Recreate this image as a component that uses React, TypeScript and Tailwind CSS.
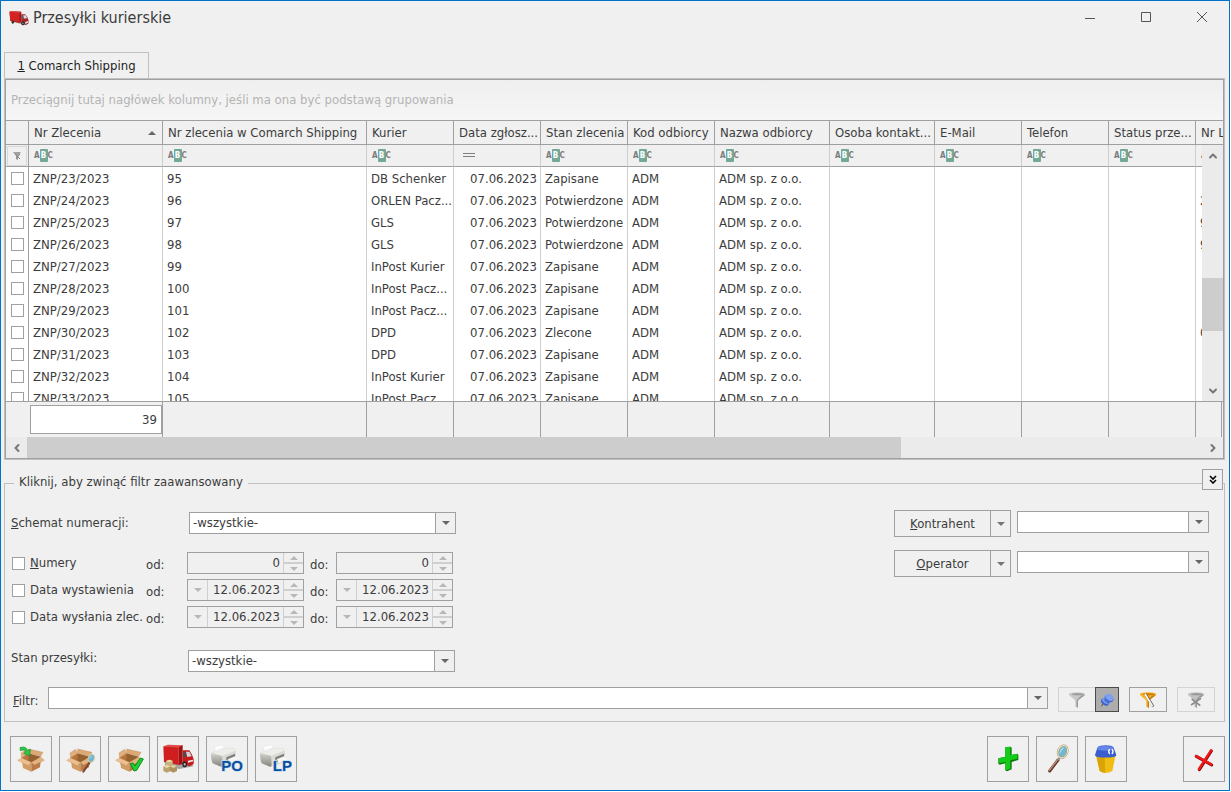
import type { ReactNode } from "react";
import { ChevronDown, ChevronLeft, ChevronRight, ChevronUp } from "lucide-react";

// the last column takes whatever is left
const columns = [
  { label: "", width: 23 },
  { label: "Nr Zlecenia", width: 134, sorted: true },
  { label: "Nr zlecenia w Comarch Shipping", width: 204 },
  { label: "Kurier", width: 87 },
  { label: "Data zgłosz...", width: 87, date: true },
  { label: "Stan zlecenia", width: 87 },
  { label: "Kod odbiorcy", width: 87 },
  { label: "Nazwa odbiorcy", width: 115 },
  { label: "Osoba kontakt...", width: 105 },
  { label: "E-Mail", width: 87 },
  { label: "Telefon", width: 87 },
  { label: "Status prze...", width: 87 },
  { label: "Nr L" },
];

const rows = [
  ["ZNP/23/2023", "95", "DB Schenker", "Zapisane", ""],
  ["ZNP/24/2023", "96", "ORLEN Pacz...", "Potwierdzone", "2"],
  ["ZNP/25/2023", "97", "GLS", "Potwierdzone", "9"],
  ["ZNP/26/2023", "98", "GLS", "Potwierdzone", "9"],
  ["ZNP/27/2023", "99", "InPost Kurier", "Zapisane", ""],
  ["ZNP/28/2023", "100", "InPost Pacz...", "Zapisane", ""],
  ["ZNP/29/2023", "101", "InPost Pacz...", "Zapisane", ""],
  ["ZNP/30/2023", "102", "DPD", "Zlecone", "0"],
  ["ZNP/31/2023", "103", "DPD", "Zapisane", ""],
  ["ZNP/32/2023", "104", "InPost Kurier", "Zapisane", ""],
  ["ZNP/33/2023", "105", "InPost Pacz...", "Zapisane", ""],
];

const checkbox =
  "block h-[13px] w-[13px] shrink-0 appearance-none border border-[#a0a0a0] bg-white checked:bg-[#4a4a4a]";

function Columns() {
  return (
    <colgroup>
      {columns.map((c) => (
        <col key={c.label} style={{ width: c.width }} />
      ))}
    </colgroup>
  );
}

function Triangle({ up = false, className = "" }: { up?: boolean; className?: string }) {
  return (
    <svg viewBox="0 0 8 4" className={`h-1 w-2 ${className}`} fill="currentColor" aria-hidden="true">
      <path d={up ? "M4 0 8 4H0z" : "M0 0h8L4 4z"} />
    </svg>
  );
}

function AbcIcon() {
  return (
    <span className="flex items-center text-[8px] leading-none font-bold text-[#7b7b7b]">
      <span>A</span>
      <span className="flex h-[13px] w-2 items-center justify-center rounded-[1px] bg-[#74a896] text-white">B</span>
      <span>C</span>
    </span>
  );
}

function Truck({ className }: { className: string }) {
  return (
    <svg viewBox="0 0 58 46" className={className} aria-hidden="true">
      <path d="M4 32 30 38 50 44 58 38 30 30z" fill="#333" opacity=".5" />
      <path d="M0 2 6 0 36 2 36 34 30 36 2 30z" fill="#a81818" />
      <path d="M0 2 30 5v31L2 30z" fill="#d32424" />
      <path d="m0 2 6-2 30 2-6 3z" fill="#e85050" />
      <path d="M36 10h12l7 10 3 8v10l-8 4-14-5z" fill="#a32626" />
      <path d="M42 13h7l5 9-10 1z" fill="#d9e2e6" />
      <path d="M37 13h4l1 10-5-1z" fill="#54646d" />
      <path d="m48 34 9-3v5l-9 4z" fill="#ddd" />
      <ellipse cx="10" cy="34" rx="4" ry="5" fill="#2b2b2b" />
      <ellipse cx="41" cy="38" rx="5" ry="6" fill="#222" />
      <ellipse cx="41" cy="38" rx="2" ry="3" fill="#aaa" />
    </svg>
  );
}

function Icon({ children }: { children: ReactNode }) {
  return (
    <svg viewBox="0 0 96 96" className="h-8 w-8" aria-hidden="true">
      {children}
    </svg>
  );
}

function Box() {
  return (
    <>
      <path d="m19 45 22-14 37 10-29 18z" fill="#96602f" />
      <path d="m19 45 22-14v18l-8 5z" fill="#b5773f" />
      <path d="m20 44 21-13-6-12-17 11z" fill="#e2ae7b" stroke="#b98150" />
      <path d="m41 31 36 9 7-12-43-10z" fill="#dca873" stroke="#b98150" />
      <path d="m20 47 29 13v26L24 75z" fill="#d19b65" />
      <path d="m49 60 29-14-3 27-26 13z" fill="#b97c48" />
      <path d="m20 45 29 13-9 10L8 52z" fill="#ecc090" stroke="#c08a58" />
      <path d="m49 58 29-15 10 9-30 14z" fill="#e3b380" stroke="#bb8350" />
    </>
  );
}

function Printer({ text }: { text: string }) {
  return (
    <Icon>
      <defs>
        <linearGradient id={`printer-${text}`} x1="0" y1="0" x2="0" y2="1">
          <stop offset="0" stopColor="#d2d2cc" />
          <stop offset="1" stopColor="#85857e" />
        </linearGradient>
      </defs>
      <path d="m11 14 3-5 20-3 4 6 1 13-26 4z" fill="#fdfdfd" stroke="#dcdcdc" />
      <path d="m1 30 37-15 32 2 4 8-40 15z" fill="#ededea" stroke="#cfcfca" />
      <path d="M2 31q-3 2-2 10l3 16q1 4 5 5l22 9q5 1 5-4V43q0-4-4-5z" fill={`url(#printer-${text})`} />
      <path d="m34 39 38-16q3 0 3 5v27L37 72z" fill="#dadad6" />
      <path d="m46 43 26-11v16L46 60z" fill="#7f7f79" />
      <path d="m50 49 22-9 10 9-26 11z" fill="#f6f6f6" />
      <text
        x="96"
        y="85"
        textAnchor="end"
        className="font-['Liberation_Sans'] text-[45px] font-bold"
        fill="#0a4f9e"
        stroke="#c3dcf3"
        strokeWidth="4"
        paintOrder="stroke"
      >
        {text}
      </text>
    </Icon>
  );
}

function Funnel({ fill, dark, mark }: { fill: string; dark: string; mark?: ReactNode }) {
  return (
    <svg viewBox="0 0 54 54" className="h-[18px] w-[18px]" aria-hidden="true">
      <path d="M3 9c0 8 15 12 19 21v17l8 3V30c4-9 21-13 21-21z" fill={fill} />
      <path d="M51 9c0 8-17 12-21 21v20l-4-1V30c2-7 12-12 14-17z" fill={dark} />
      <ellipse cx="27" cy="9" rx="24" ry="5" fill={fill} />
      <ellipse cx="29" cy="10" rx="17" ry="3" fill={dark} />
      {mark}
    </svg>
  );
}

function ToolButton({ label, children }: { label: string; children: ReactNode }) {
  return (
    <button
      type="button"
      aria-label={label}
      className="flex h-[46px] w-[42px] items-center justify-center border border-[#a0a0a0] hover:bg-[#e3e3e3]"
    >
      {children}
    </button>
  );
}

function Combo({ id, label, value = "", className }: { id: string; label?: string; value?: string; className: string }) {
  return (
    <div className={`relative h-[22px] ${className}`}>
      <select
        id={id}
        aria-label={label}
        className="block h-full w-full appearance-none border border-[#a0a0a0] bg-white pr-6 pl-[3px] outline-none"
      >
        <option>{value}</option>
      </select>
      <span className="pointer-events-none absolute inset-y-0 right-0 flex w-[21px] items-center justify-center border border-[#a0a0a0] bg-[#f0f0f0] text-[#666]">
        <Triangle />
      </span>
    </div>
  );
}

function Spinner({ label, value, date = false }: { label: string; value: string; date?: boolean }) {
  return (
    <div className="flex h-[22px] w-[117px] border border-[#a0a0a0] text-[#b8b8b8]">
      {date && (
        <button
          type="button"
          disabled
          aria-label={`${label} kalendarz`}
          className="flex w-5 shrink-0 items-center justify-center border-r border-[#cfcfcf]"
        >
          <Triangle />
        </button>
      )}
      <input
        disabled
        aria-label={label}
        defaultValue={value}
        className="min-w-0 flex-1 bg-transparent pr-[3px] text-right text-[#3c3c3c]"
      />
      <div className="flex w-5 shrink-0 flex-col border-l border-[#cfcfcf]">
        <button type="button" disabled aria-label={`${label} więcej`} className="flex flex-1 items-center justify-center border-b-2 border-[#cfcfcf]">
          <Triangle up />
        </button>
        <button type="button" disabled aria-label={`${label} mniej`} className="flex flex-1 items-center justify-center">
          <Triangle />
        </button>
      </div>
    </div>
  );
}

function RangeRow({ id, label, value, date }: { id: string; label: ReactNode; value: string; date?: boolean }) {
  return (
    <div className="flex h-[22px] items-center">
      <input type="checkbox" id={id} className={checkbox} />
      <label htmlFor={id} className="w-[121px] pl-[5px] whitespace-nowrap">
        {label}
      </label>
      <span className="w-[41px] pt-1">od:</span>
      <Spinner label={`${id} od`} value={value} date={date} />
      <span className="w-8 pt-1 pl-1.5">do:</span>
      <Spinner label={`${id} do`} value={value} date={date} />
    </div>
  );
}

function PickerRow({ id, label }: { id: string; label: string }) {
  return (
    <div className="flex gap-1.5">
      <div className="flex h-[27px] w-[117px] border border-[#a0a0a0]">
        <button type="button" className="flex-1">
          <u>{label[0]}</u>
          {label.slice(1)}
        </button>
        <button
          type="button"
          aria-label={`${label} lista`}
          className="flex w-5 items-center justify-center border-l border-[#a0a0a0] text-[#777]"
        >
          <Triangle />
        </button>
      </div>
      <Combo id={id} label={label} className="mt-px w-48" />
    </div>
  );
}

function ShipmentGrid() {
  return (
    <section className="flex min-h-0 flex-1 flex-col border border-[#c0c0c0]">
      <div className="flex min-h-0 flex-1 flex-col border border-[#a0a0a0]">
        <p className="flex h-10 shrink-0 items-center bg-linear-to-b from-[#efefef] to-[#f6f6f6] px-[5px] text-[#b4b4b4]">
          Przeciągnij tutaj nagłówek kolumny, jeśli ma ona być podstawą grupowania
        </p>

        <div className="relative min-h-0 flex-1 overflow-hidden border-y border-[#a0a0a0] bg-white">
          <table className="w-full table-fixed border-separate border-spacing-0 whitespace-nowrap">
            <Columns />
            <thead>
              <tr className="h-6 bg-[#f0f0f0]">
                {columns.map((c) => (
                  <th
                    key={c.label}
                    className="overflow-hidden border-r border-b border-[#a0a0a0] p-0 pl-[5px] text-left font-normal last:border-r-0"
                  >
                    <span className="flex items-center justify-between pr-1.5">
                      {c.label}
                      {c.sorted && <Triangle up className="text-[#666]" />}
                    </span>
                  </th>
                ))}
              </tr>
              <tr className="h-[22px] bg-[#f0f0f0]">
                {columns.map((c, i) => (
                  <td
                    key={c.label}
                    className="overflow-hidden border-r border-b border-r-[#cfcfcf] border-b-[#a0a0a0] p-0 pl-[5px] first:border-r-[#a0a0a0] first:pl-px last:border-r-0"
                  >
                    {i === 0 && (
                      <button type="button" aria-label="Filtr wiersza" className="flex h-5 w-5 items-center justify-center border border-[#d8d8d8]">
                        <svg viewBox="0 0 10 10" className="h-2.5 w-2.5" aria-hidden="true">
                          <path d="M1 1h8L6 5v4L4 8V5z" fill="#a0a0a0" />
                          <path d="m3 3 5 5M8 3 4 8" stroke="#888" />
                        </svg>
                      </button>
                    )}
                    {i > 0 && c.date && (
                      <svg viewBox="0 0 12 5" className="ml-1 h-[5px] w-3" aria-hidden="true">
                        <path d="M0 .5h12M0 3.500h12" stroke="#808080" />
                      </svg>
                    )}
                    {i > 0 && !c.date && <AbcIcon />}
                  </td>
                ))}
              </tr>
            </thead>
            <tbody>
              {rows.map(([number, order, courier, state, letter]) => {
                const cells = [number, order, courier, "07.06.2023", state, "ADM", "ADM sp. z o.o.", "", "", "", "", letter];
                return (
                  <tr key={number} className="h-[22px]">
                    <td className="border-r border-[#a0a0a0] p-0 pl-[5px]">
                      <input type="checkbox" aria-label={number} className={checkbox} />
                    </td>
                    {cells.map((cell, i) => (
                      <td
                        key={i}
                        className={`overflow-hidden border-r border-[#cfcfcf] p-0 px-1 pt-0.5 last:border-r-0 ${i === 3 ? "pr-[3px] text-right" : ""}`}
                      >
                        {cell}
                      </td>
                    ))}
                  </tr>
                );
              })}
            </tbody>
          </table>

          <div className="absolute top-6 right-0 bottom-0 flex w-[21px] flex-col bg-[#ebebeb] text-[#777]">
            <button type="button" aria-label="W górę" className="flex h-[21px] items-center justify-center">
              <ChevronUp size={12} strokeWidth={4} />
            </button>
            <div className="flex-[112]" />
            <div className="flex-[53] bg-[#cdcdcd]" />
            <div className="flex-[49]" />
            <button type="button" aria-label="W dół" className="flex h-[21px] items-center justify-center">
              <ChevronDown size={12} strokeWidth={4} />
            </button>
          </div>
        </div>

        <div className="shrink-0 pr-px">
          <table className="w-full table-fixed border-separate border-spacing-0">
            <Columns />
            <tbody>
              <tr className="h-[35px]">
                {columns.map((c, i) => (
                  <td key={c.label} className="border-r border-[#a0a0a0] p-0 first:border-r-0">
                    {i === 1 && (
                      <div className="ml-px flex h-[29px] items-center justify-end border border-[#a0a0a0] bg-white pr-1">39</div>
                    )}
                  </td>
                ))}
              </tr>
            </tbody>
          </table>
        </div>

        <div className="flex h-[21px] shrink-0 bg-[#ebebeb] text-[#777]">
          <button type="button" aria-label="W lewo" className="flex w-[21px] items-center justify-center">
            <ChevronLeft size={12} strokeWidth={4} />
          </button>
          <div className="flex-[874] bg-[#cdcdcd]" />
          <div className="flex-[301]" />
          <button type="button" aria-label="W prawo" className="flex w-[21px] items-center justify-center">
            <ChevronRight size={12} strokeWidth={4} />
          </button>
        </div>
      </div>
    </section>
  );
}

function AdvancedFilter() {
  return (
    <fieldset className="relative mt-3.5 border border-[#c0c0c0] pr-[9px] pb-[9px] pl-1.5">
      <legend className="ml-[3px] h-[19px] px-[5px] leading-4">Kliknij, aby zwinąć filtr zaawansowany</legend>
      <button
        type="button"
        aria-label="Zwiń filtr"
        className="absolute -top-6 right-px flex h-[21px] w-[21px] items-center justify-center border border-[#a0a0a0] bg-[#f0f0f0]"
      >
        <svg viewBox="0 0 8 9" className="h-[9px] w-2" fill="none" stroke="#000" strokeWidth="1.6" aria-hidden="true">
          <path d="m1 1 3 3 3-3M1 5l3 3 3-3" />
        </svg>
      </button>

      <div className="flex justify-between pt-[17px] pr-1.5">
        <div>
          <div className="flex items-center pt-0.5">
            <label htmlFor="schemat" className="w-[178px]">
              <u>S</u>chemat numeracji:
            </label>
            <Combo id="schemat" value="-wszystkie-" className="w-[267px]" />
          </div>
          <div className="mt-[18px] flex flex-col gap-[5px] pl-px">
            <RangeRow id="numery" label={<><u>N</u>umery</>} value="0" />
            <RangeRow id="wystawienie" label="Data wystawienia" value="12.06.2023" date />
            <RangeRow id="wyslanie" label="Data wysłania zlec." value="12.06.2023" date />
          </div>
          <div className="mt-[22px] flex items-start">
            <label htmlFor="stan" className="w-[177px]">
              Stan przesyłki:
            </label>
            <Combo id="stan" value="-wszystkie-" className="w-[267px]" />
          </div>
        </div>
        <div className="flex flex-col gap-[13px]">
          <PickerRow id="kontrahent" label="Kontrahent" />
          <PickerRow id="operator" label="Operator" />
        </div>
      </div>

      <div className="mt-[15px] flex items-start">
        <label htmlFor="filtr" className="w-[37px] pt-1.5 pl-0.5">
          <u>F</u>iltr:
        </label>
        <Combo id="filtr" className="flex-1" />
        <div className="ml-2.5 flex h-[25px]">
          <button type="button" aria-label="Filtruj" className="flex w-[37px] items-center justify-center border border-r-0 border-[#d4d4d4]">
            <Funnel fill="#c8c8c8" dark="#999" />
          </button>
          <button type="button" aria-label="Przypnij filtr" className="flex w-6 items-center justify-center border border-[#4a4a4a] bg-[#adadad]">
            <svg viewBox="0 0 42 42" className="h-3.5 w-3.5" aria-hidden="true">
              <path d="m10 31-6 9" stroke="#555" strokeWidth="3" />
              <ellipse cx="15" cy="27" rx="13" ry="9" transform="rotate(35 15 27)" fill="#3b5fc4" />
              <ellipse cx="17" cy="24" rx="12" ry="7" transform="rotate(35 17 24)" fill="#7299f2" />
              <path d="m17 13 16 12-8 8-13-11z" fill="#4a70d6" />
              <ellipse cx="27" cy="16" rx="14" ry="11" transform="rotate(35 27 16)" fill="#4267cb" />
              <ellipse cx="28" cy="13" rx="13" ry="9" transform="rotate(35 28 13)" fill="#7ba0f6" />
            </svg>
          </button>
        </div>
        <button type="button" aria-label="Konstruktor filtra" className="ml-2.5 flex h-[25px] w-[38px] items-center justify-center border border-[#a0a0a0]">
          <Funnel
            fill="#fbb024"
            dark="#c67b0b"
            mark={
              <>
                <path d="m20 10 23 37" stroke="#555" strokeWidth="7" />
                <path d="m18 9 23 37" stroke="#fff" strokeWidth="5" />
              </>
            }
          />
        </button>
        <button type="button" aria-label="Wyczyść filtr" className="ml-2.5 flex h-[25px] w-[38px] items-center justify-center border border-[#d4d4d4]">
          <Funnel fill="#c2c2c2" dark="#969696" mark={<path d="m14 24 26 20M42 22 12 42" stroke="#8c8c8c" strokeWidth="5" />} />
        </button>
      </div>
    </fieldset>
  );
}

function Toolbar() {
  return (
    <div className="mt-3.5 flex justify-between pl-1.5">
      <div className="flex gap-[7px]">
        <ToolButton label="Nowe zlecenie">
          <Icon>
            <Box />
            <path d="M15 14c11-4 19-1 23 8l8-3-2 20-18-8 6-4c-3-6-8-7-16-4z" fill="#2dc84a" stroke="#178a2a" strokeWidth="2" />
          </Icon>
        </ToolButton>
        <ToolButton label="Sprawdź zlecenie">
          <Icon>
            <Box />
            <path d="M77 58 58 86" stroke="#80462f" strokeWidth="6" strokeLinecap="round" />
            <ellipse cx="82" cy="46" rx="9" ry="12" transform="rotate(20 82 46)" fill="#6cb4d3" stroke="#d8cda6" strokeWidth="3" />
            <path d="M77 49c0-6 4-10 8-10z" fill="#bde5f1" />
          </Icon>
        </ToolButton>
        <ToolButton label="Zatwierdź zlecenie">
          <Icon>
            <Box />
            <path d="m52 62 8-2 6 9 16-24 9 3-20 34-8 2z" fill="#1fd233" stroke="#0a8a18" strokeWidth="3" />
          </Icon>
        </ToolButton>
        <ToolButton label="Zamów kuriera">
          <Icon>
            <path d="m8 58 82 5 4 7-42 8-42-9z" fill="#555" opacity=".5" />
            <path d="m4 10 46-1v57L6 57z" fill="#d01d1d" />
            <path d="m4 10 14-5 44 2v2l-12 5z" fill="#e04b4b" />
            <path d="m50 13 12-6v56l-12 3z" fill="#a01111" />
            <path d="M62 22h20l8 13 5 13v15l-12 7-21-7z" fill="#c51b1b" />
            <path d="M72 26h10l7 14-13 2z" fill="#c9dbe0" />
            <path d="m64 27 6-1 3 15-9 1z" fill="#42525a" />
            <path d="m78 53 15-3v5l-15 4z" fill="#eee" />
            <ellipse cx="68" cy="64" rx="7" ry="9" fill="#222" />
            <ellipse cx="68" cy="64" rx="3" ry="4" fill="#bbb" />
            <path d="m12 54 11-4 9 4v14l-10 4-10-5z" fill="#c9b27e" />
            <path d="m12 54 11-4 9 4-10 4z" fill="#eadbae" />
            <path d="m4 70 11-4 10 4v15l-11 4-10-5z" fill="#bda26d" />
            <path d="m4 70 11-4 10 4-11 5z" fill="#eadbae" />
            <path d="m24 70 11-4 10 4v14l-11 5-10-5z" fill="#ad925e" />
            <path d="m24 70 11-4 10 4-11 5z" fill="#e3d3a2" />
          </Icon>
        </ToolButton>
        <ToolButton label="Drukuj PO">
          <Printer text="PO" />
        </ToolButton>
        <ToolButton label="Drukuj LP">
          <Printer text="LP" />
        </ToolButton>
      </div>

      <div className="flex">
        <div className="flex gap-[7px]">
          <ToolButton label="Dodaj">
            <Icon>
              <path d="m40 13 15-2 4 3v22l17-4 3 4v15l-20 6v22l-14 6-5-3V61l-17 4-4-3V46l21-5z" fill="#08780a" />
              <path d="m40 13 15-2v25l21-4v15l-21 5v25l-14 5V57l-20 4V46l19-5z" fill="#12cc18" />
            </Icon>
          </ToolButton>
          <ToolButton label="Podgląd">
            <Icon>
              <path d="M51 51 26 84" stroke="#5f382b" strokeWidth="9" strokeLinecap="round" />
              <path d="M50 50 25 82" stroke="#c58d78" strokeWidth="4" strokeLinecap="round" />
              <path d="m51 51 6-9" stroke="#8e8e86" strokeWidth="5" />
              <ellipse cx="65" cy="26" rx="14" ry="19" transform="rotate(22 65 26)" fill="#72b7d2" stroke="#a59a78" strokeWidth="6" />
              <ellipse cx="65" cy="26" rx="14" ry="19" transform="rotate(22 65 26)" fill="none" stroke="#f2e8c4" strokeWidth="3" />
              <path d="M56 33c-1-12 5-19 14-20-6 7-8 12-14 20z" fill="#a5d8ea" />
            </Icon>
          </ToolButton>
          <ToolButton label="Usuń">
            <Icon>
              <path d="M19 40h57l-9 44q-10 6-21 6-10-1-17-6z" fill="#f0bd12" />
              <path d="M19 40h25l2 50q-10-1-17-6z" fill="#dba406" />
              <path d="M15 36 22 14q2-5 10-6 15-3 30 0 7 1 9 6l8 22q0 4-5 5-28 5-54 0-5-1-5-5z" fill="#3a5ed0" />
              <path d="m22 20 3-8q16-6 42 0l4 9q-24 5-49-1z" fill="#6685ea" />
              <path d="M59 19q-6 6 0 14M66 19q6 6 0 14" fill="none" stroke="#fff" strokeWidth="4" />
            </Icon>
          </ToolButton>
        </div>
        <div className="ml-14">
          <ToolButton label="Zamknij okno">
            <Icon>
              <path d="m25 40 46 26M70 24 34 80" stroke="#830808" strokeWidth="9" strokeLinecap="round" />
              <path d="m24 39 46 25M69 22 33 78" stroke="#f21818" strokeWidth="7" strokeLinecap="round" />
            </Icon>
          </ToolButton>
        </div>
      </div>
    </div>
  );
}

export default function App() {
  return (
    <div className="h-screen min-h-[640px] bg-white pr-px pb-px">
      <main className="flex h-full flex-col overflow-hidden border border-[#0173c7] bg-[#f0f0f0] pr-1 pb-2 pl-[3px] font-['DejaVu_Sans_Condensed','DejaVu_Sans',sans-serif] text-[13px] leading-4 text-[#3c3c3c]">
        <header className="flex h-[51px] shrink-0 items-start justify-between pt-1.5 pr-[18px] pl-[5px]">
          <h1 className="flex h-[22px] items-center gap-1 text-[16px]">
            <Truck className="h-[15px] w-5" />
            Przesyłki kurierskie
          </h1>
          <div className="flex h-5 items-center gap-[46px] text-[#555]">
            <button type="button" aria-label="Minimalizuj">
              <svg viewBox="0 0 10 10" className="h-2.5 w-2.5" aria-hidden="true">
                <path d="M0 6.500h10" stroke="currentColor" />
              </svg>
            </button>
            <button type="button" aria-label="Maksymalizuj">
              <svg viewBox="0 0 10 10" className="h-2.5 w-2.5" fill="none" aria-hidden="true">
                <path d="M.5.5h9v9h-9z" stroke="currentColor" />
              </svg>
            </button>
            <button type="button" aria-label="Zamknij">
              <svg viewBox="0 0 10 10" className="h-2.5 w-2.5" aria-hidden="true">
                <path d="m0 0 10 10M10 0 0 10" stroke="currentColor" />
              </svg>
            </button>
          </div>
        </header>

        <nav className="flex h-[26px] shrink-0">
          <button type="button" className="w-[145px] border border-b-0 border-[#c0c0c0] text-center text-[#1e1e1e]">
            <u>1</u> Comarch Shipping
          </button>
        </nav>

        <ShipmentGrid />
        <AdvancedFilter />
        <Toolbar />
      </main>
    </div>
  );
}
